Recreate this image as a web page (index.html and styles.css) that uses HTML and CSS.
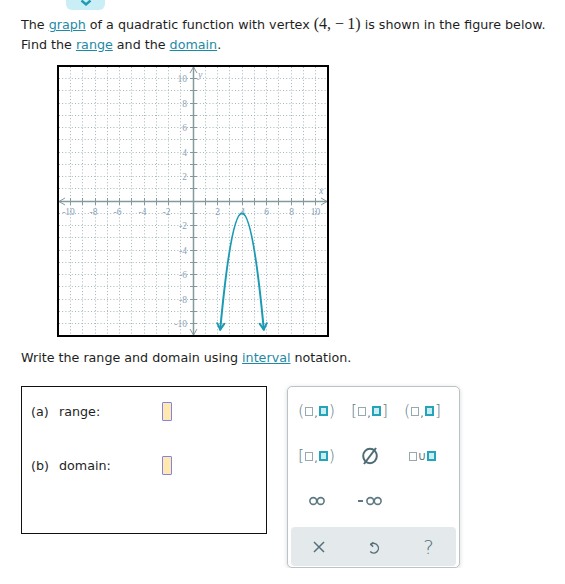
FILE: index.html
```html
<!DOCTYPE html>
<html>
<head>
<meta charset="utf-8">
<link rel="stylesheet" href="styles.css">
</head>
<body>
<div class="page">
  <div class="tab">
    <svg width="12" height="7" viewBox="0 0 12 7"><path d="M1.5 0.5 L6 4.5 L10.5 0.5" fill="none" stroke="#1f9ab3" stroke-width="2.4"/></svg>
  </div>
  <p class="prompt">The <a href="#">graph</a> of a quadratic function with vertex <span class="math">(4, −&thinsp;1)</span> is shown in the figure below.<br>Find the <a href="#">range</a> and the <a href="#">domain</a>.</p>
  <div class="graph">
    <svg width="272" height="272" viewBox="0 0 272 272">
      <g stroke="#a3b6bb" stroke-width="1" stroke-dasharray="1 2.2" fill="none">
        <path d="M13.5 2V270M25.5 2V270M38.5 2V270M50.5 2V270M62.5 2V270M74.5 2V270M87.5 2V270M99.5 2V270M111.5 2V270M123.5 2V270M148.5 2V270M160.5 2V270M172.5 2V270M185.5 2V270M197.5 2V270M209.5 2V270M221.5 2V270M234.5 2V270M246.5 2V270M258.5 2V270"/>
        <path d="M2 13.5H270M2 25.5H270M2 38.5H270M2 50.5H270M2 62.5H270M2 74.5H270M2 87.5H270M2 99.5H270M2 111.5H270M2 123.5H270M2 148.5H270M2 160.5H270M2 172.5H270M2 185.5H270M2 197.5H270M2 209.5H270M2 221.5H270M2 234.5H270M2 246.5H270M2 258.5H270"/>
      </g>
      <g stroke="#83999d" fill="none">
        <path d="M2 136.5H270M136.5 2V270" stroke-width="1.5"/>
        <path stroke-width="1" d="M13.5 133v7M25.5 133v7M38.5 133v7M50.5 133v7M62.5 133v7M74.5 133v7M87.5 133v7M99.5 133v7M111.5 133v7M123.5 133v7M148.5 133v7M160.5 133v7M172.5 133v7M185.5 133v7M197.5 133v7M209.5 133v7M221.5 133v7M234.5 133v7M246.5 133v7M258.5 133v7"/>
        <path stroke-width="1" d="M133 13.5h7M133 25.5h7M133 38.5h7M133 50.5h7M133 62.5h7M133 74.5h7M133 87.5h7M133 99.5h7M133 111.5h7M133 123.5h7M133 148.5h7M133 160.5h7M133 172.5h7M133 185.5h7M133 197.5h7M133 209.5h7M133 221.5h7M133 234.5h7M133 246.5h7M133 258.5h7"/>
        <path d="M264 133L270 136.5L264 140M8 133L2 136.5L8 140M133 8L136.5 2L140 8M133 264L136.5 270L140 264" stroke-width="1"/>
      </g>
      <g class="ticklbl" text-anchor="middle">
        <text x="11.5" y="150">-10</text>
        <text x="36.5" y="150">-8</text>
        <text x="60.5" y="150">-6</text>
        <text x="85.5" y="150">-4</text>
        <text x="109.5" y="150">-2</text>
        <text x="160.5" y="150">2</text>
        <text x="185.5" y="150">4</text>
        <text x="209.5" y="150">6</text>
        <text x="234.5" y="150">8</text>
        <text x="258.5" y="150">10</text>
      </g>
      <g class="ticklbl" text-anchor="end">
        <text x="130" y="17">10</text>
        <text x="130" y="42">8</text>
        <text x="130" y="66">6</text>
        <text x="130" y="91">4</text>
        <text x="130" y="115">2</text>
        <text x="130" y="164">-2</text>
        <text x="130" y="189">-4</text>
        <text x="130" y="213">-6</text>
        <text x="130" y="238">-8</text>
        <text x="130" y="262">-10</text>
      </g>
      <text class="axlbl" x="141" y="13">y</text>
      <text class="axlbl" x="262" y="129">x</text>
      <g stroke="#1b9ab4" stroke-width="2" fill="none" stroke-linecap="round" stroke-linejoin="round">
        <path d="M163.2 264.6Q174.1 148.25 185 148.25Q195.9 148.25 206.8 264.6"/>
        <path d="M160.3 258.2L163.2 264.6L167.2 258.9M202.8 258.9L206.8 264.6L209.7 258.2"/>
      </g>
      <rect x="1" y="1" width="270" height="270" fill="none" stroke="#000" stroke-width="2"/>
    </svg>
  </div>
  <p class="note">Write the range and domain using <a href="#">interval</a> notation.</p>
  <div class="work">
    <div class="answers">
      <div class="row"><span>(a)</span><span>range:</span><span class="slot"></span></div>
      <div class="row"><span>(b)</span><span>domain:</span><span class="slot"></span></div>
    </div>
    <div class="palette">
      <div class="keys">
        <button class="key"><span class="br">(</span><span class="sq"></span><span class="cm">,</span><span class="sq on"></span><span class="br">)</span></button>
        <button class="key"><span class="br">[</span><span class="sq"></span><span class="cm">,</span><span class="sq on"></span><span class="br">]</span></button>
        <button class="key"><span class="br">(</span><span class="sq"></span><span class="cm">,</span><span class="sq on"></span><span class="br">]</span></button>
        <button class="key"><span class="br">[</span><span class="sq"></span><span class="cm">,</span><span class="sq on"></span><span class="br">)</span></button>
        <button class="key"><svg width="20" height="20" viewBox="0 0 20 20"><ellipse cx="10" cy="10" rx="6.8" ry="7.3" fill="none" stroke="#4f6b75" stroke-width="2"/><path d="M4 18L16 2" stroke="#4f6b75" stroke-width="2"/></svg></button>
        <button class="key"><span class="sq"></span><span class="cup">∪</span><span class="sq on"></span></button>
        <button class="key"><svg width="16" height="10" viewBox="0 0 16 10"><circle cx="4.3" cy="5" r="3.4" fill="none" stroke="#5d7983" stroke-width="1.6"/><circle cx="11.7" cy="5" r="3.4" fill="none" stroke="#5d7983" stroke-width="1.6"/></svg></button>
        <button class="key"><span class="neg"></span><svg width="16" height="10" viewBox="0 0 16 10"><circle cx="4.3" cy="5" r="3.4" fill="none" stroke="#5d7983" stroke-width="1.6"/><circle cx="11.7" cy="5" r="3.4" fill="none" stroke="#5d7983" stroke-width="1.6"/></svg></button>
        <span></span>
      </div>
      <div class="bar">
        <button class="key"><svg width="12" height="12" viewBox="0 0 12 12"><path d="M1 1L11 11M11 1L1 11" stroke="#55707a" stroke-width="1.5"/></svg></button>
        <button class="key"><svg width="14" height="16" viewBox="0 0 14 16"><path d="M4 5.2A4.8 4.8 0 1 1 3.2 12.6" fill="none" stroke="#55707a" stroke-width="1.4"/><path d="M6.4 3.2L3.6 5.4L6.2 7.6" fill="none" stroke="#55707a" stroke-width="1.4" stroke-linejoin="round"/></svg></button>
        <button class="key"><span class="q">?</span></button>
      </div>
    </div>
  </div>
</div>
</body>
</html>
```
FILE: styles.css
```css
body {
  margin: 0;
  background: #fff;
  color: #1e1e1e;
  font-family: "DejaVu Sans", sans-serif;
  font-size: 12.7px;
}
.page {
  padding-left: 21px;
}
.tab {
  width: 39px;
  height: 10px;
  margin-left: 45px;
  background: #c9eef5;
  border-radius: 0 0 6px 6px;
  display: flex;
  justify-content: center;
  align-items: flex-start;
}
.tab svg { display: block; }
.prompt {
  margin: 4px 0 0;
  line-height: 20px;
}
a {
  color: #1d89a5;
  text-decoration: underline;
}
.math {
  font-family: "Liberation Serif", serif;
  font-size: 16px;
}
.graph {
  margin: 10px 0 0 36px;
  width: 272px;
  height: 272px;
}
.graph svg { display: block; }
.ticklbl {
  font-family: "Liberation Serif", serif;
  font-size: 9.5px;
  fill: #8ba2b8;
}
.axlbl {
  font-family: "Liberation Serif", serif;
  font-style: italic;
  font-size: 10px;
  fill: #8ba2b8;
}
.note {
  margin: 11px 0 0;
  line-height: 20px;
}
.work {
  display: flex;
  align-items: flex-start;
  gap: 20px;
  margin-top: 18px;
}
.answers {
  width: 246px;
  height: 148px;
  box-sizing: border-box;
  border: 1.5px solid #111;
  padding: 15px 0 0 9px;
  display: flex;
  flex-direction: column;
  gap: 35px;
}
.row {
  display: grid;
  grid-template-columns: 28px 103px 10px;
  align-items: center;
  height: 19px;
}
.slot {
  width: 10px;
  height: 19px;
  box-sizing: border-box;
  border: 1.5px solid #8383e8;
  background: #ffe9ae;
  border-radius: 1px;
}
.palette {
  width: 173px;
  box-sizing: border-box;
  border: 1px solid #b9c4c8;
  border-radius: 5px;
  box-shadow: 0 1px 4px rgba(0, 0, 0, 0.16);
  padding: 1.5px 3px 1px 3px;
  background: #fff;
}
.keys {
  display: grid;
  grid-template-columns: repeat(3, 53px);
  grid-auto-rows: 45px;
  margin-left: -1px;
}
.key {
  display: flex;
  align-items: center;
  justify-content: center;
  border: 0;
  background: none;
  padding: 0;
  margin: 0;
  color: #5d7983;
  font-family: "DejaVu Sans", sans-serif;
}
.br {
  font-size: 16px;
  font-weight: 200;
  line-height: 1;
  color: #5d7983;
}
.cm {
  font-size: 11px;
  line-height: 1;
  margin: 5px 1px 0 1px;
  color: #5d7983;
}
.sq {
  display: inline-block;
  width: 8px;
  height: 9px;
  box-sizing: border-box;
  border: 1.5px solid #97a9af;
}
.sq.on {
  width: 9px;
  height: 10px;
  border: 2px solid #26a2b9;
  background: #c8eef3;
}
.br + .sq { margin-left: 1px; }
.sq.on + .br { margin-left: 1px; }
.cup {
  font-size: 12px;
  line-height: 1;
  margin: 0 1px;
  color: #5d7983;
}
.neg {
  display: inline-block;
  width: 5px;
  height: 1.6px;
  background: #5d7983;
  margin-right: 3px;
}
.bar {
  display: grid;
  grid-template-columns: repeat(3, 1fr);
  height: 39px;
  margin-top: 3.5px;
  background: #e4e9eb;
  border-radius: 4px;
}
.q {
  font-size: 20px;
  font-weight: 200;
  line-height: 1;
  color: #55707a;
}
```
